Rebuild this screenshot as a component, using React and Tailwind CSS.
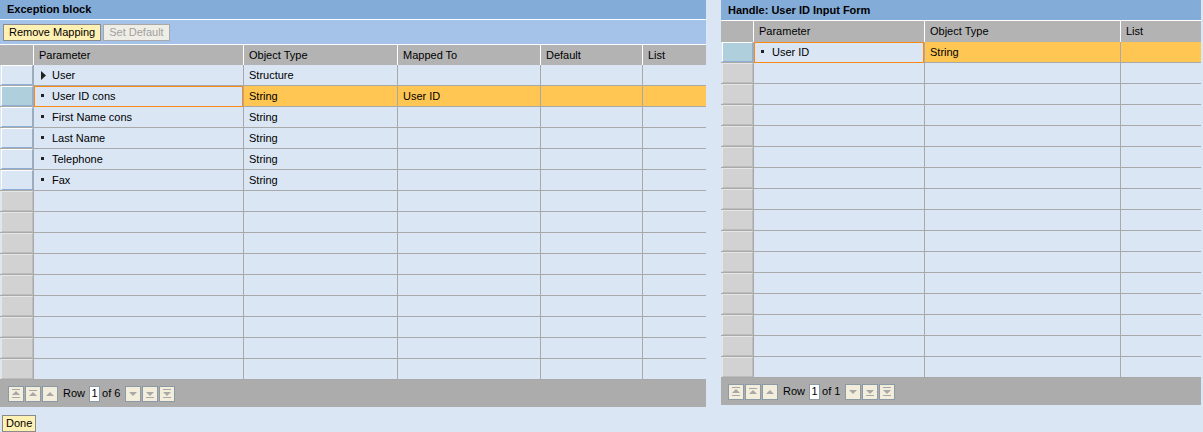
import React from "react";

const LEFT_COLS = ["w-[34px]", "w-[210px]", "w-[154px]", "w-[143px]", "w-[102px]", "flex-1"];
const RIGHT_COLS = ["w-[33px]", "w-[171px]", "w-[196px]", "flex-1"];

const leftRows = [
  { kind: "data", param: "User", expand: true, type: "Structure", mapped: "" },
  { kind: "data", param: "User ID cons", type: "String", mapped: "User ID", selected: true },
  { kind: "data", param: "First Name cons", type: "String", mapped: "" },
  { kind: "data", param: "Last Name", type: "String", mapped: "" },
  { kind: "data", param: "Telephone", type: "String", mapped: "" },
  { kind: "data", param: "Fax", type: "String", mapped: "" },
];

const rightRows = [{ kind: "data", param: "User ID", type: "String", selected: true }];

// fill a table up to a fixed number of lines
const pad = (rows, n) => [...rows, ...Array(n - rows.length).fill({ kind: "empty" })];

const Selector = ({ kind, selected }) => {
  if (kind === "empty")
    return (
      <div className="h-full w-full border border-t-[#e6e6e6] border-l-[#e6e6e6] border-r-[#bdbdbd] border-b-[#bdbdbd] bg-[#d2d2d2]" />
    );
  return (
    <div
      className={
        "h-full w-full border border-t-white border-l-white border-r-[#8eaed6] border-b-[#8eaed6] " +
        (selected ? "bg-[#aecfdb]" : "bg-[#dae6f4]")
      }
    />
  );
};

const Bullet = () => <span className="inline-block w-[3px] h-[3px] bg-[#222] mr-[7px] mb-[2px]" />;

const Expand = () => (
  <svg width="5" height="9" viewBox="0 0 5 9" className="mr-[5px]">
    <polygon points="0,0 5,4.5 0,9" fill="#222" />
  </svg>
);

const ParamCell = ({ row, width }) => (
  <div className={`${width} relative flex items-center pl-[7px] border-r border-[#a9a9a9] bg-[#dae6f4]`}>
    {row.expand ? <Expand /> : <Bullet />}
    <span className="ml-px">{row.param}</span>
    {row.selected && <div className="absolute top-0 left-0 right-0 -bottom-px border border-[#fb8a14]" />}
  </div>
);

const Cell = ({ width, selected, children }) => (
  <div
    className={`${width} flex items-center pl-[5px] border-r border-[#a9a9a9] ${selected ? "bg-[#ffc653]" : ""}`}
  >
    {children}
  </div>
);

const Header = ({ cols, labels, height }) => (
  <div className={`flex ${height} bg-[#b3b3b3]`}>
    {cols.map((w, i) => (
      <div key={i} className={`${w} flex items-center pl-[5px] ${i < cols.length - 1 ? "border-r border-white" : ""}`}>
        {labels[i]}
      </div>
    ))}
  </div>
);

const icons = {
  first: (
    <>
      <rect x="1" y="0" width="8" height="1" />
      <polygon points="1,6 5,2 9,6" />
      <rect x="1" y="8" width="8" height="1" />
    </>
  ),
  pageUp: (
    <>
      <rect x="1" y="1" width="8" height="1" />
      <polygon points="1,7 5,3 9,7" />
    </>
  ),
  up: <polygon points="1,7 5,3 9,7" />,
  down: <polygon points="1,3 5,7 9,3" />,
  pageDown: (
    <>
      <polygon points="1,3 5,7 9,3" />
      <rect x="1" y="8" width="8" height="1" />
    </>
  ),
  last: (
    <>
      <rect x="1" y="0" width="8" height="1" />
      <polygon points="1,3 5,7 9,3" />
      <rect x="1" y="8" width="8" height="1" />
    </>
  ),
};

const PagerBtn = ({ icon }) => (
  <div className="w-[16px] h-[16px] flex items-center justify-center bg-[#f3eedb] border border-[#8b9aa5]">
    <svg width="10" height="10" viewBox="0 0 10 10" fill="#a8a8a8">
      {icons[icon]}
    </svg>
  </div>
);

const Pager = ({ total, padLeft }) => (
  <div className={`flex items-center h-[27px] bg-[#acacac] text-[11px] ${padLeft}`}>
    <div className="flex gap-px">
      <PagerBtn icon="first" />
      <PagerBtn icon="pageUp" />
      <PagerBtn icon="up" />
    </div>
    <span className="ml-[5px]">Row</span>
    <div className="ml-[4px] w-[11px] h-[16px] bg-white border border-[#8b9aa5] flex items-center justify-center">
      1
    </div>
    <span className="ml-[2px]">of {total}</span>
    <div className="ml-[5px] flex gap-px">
      <PagerBtn icon="down" />
      <PagerBtn icon="pageDown" />
      <PagerBtn icon="last" />
    </div>
  </div>
);

const TitleBar = ({ children, height }) => (
  <div className={`${height} bg-[#84acd9] border-b border-white flex items-center pl-[7px] font-bold`}>
    {children}
  </div>
);

const App = () => {
  return (
    <div className="w-[1203px] h-[432px] bg-[#dae6f4] text-[11px] text-black font-['Liberation_Sans',Arial,sans-serif] overflow-hidden">
      <div className="flex">
        {/* Exception block */}
        <div className="w-[706px] flex flex-col">
          <TitleBar height="h-[20px]">Exception block</TitleBar>
          <div className="h-[25px] bg-[#a5c3e8] border-b border-white flex items-center pl-[3px] gap-[2px]">
            <button className="h-[17px] px-[5px] bg-[#fff0b3] border border-[#8a8a8a] text-[11px] leading-none">
              Remove Mapping
            </button>
            <button className="h-[17px] px-[5px] bg-[#efeee6] border border-[#a8a8a8] text-[11px] text-[#a0a0a0] leading-none">
              Set Default
            </button>
          </div>
          <Header
            cols={LEFT_COLS}
            height="h-[20px]"
            labels={["", "Parameter", "Object Type", "Mapped To", "Default", "List"]}
          />
          {pad(leftRows, 15).map((row, i) => (
            <div key={i} className="flex h-[21px] border-b border-[#a9a9a9] bg-[#dae6f4]">
              <div className={`${LEFT_COLS[0]} pl-[1px] border-r border-[#a9a9a9]`}>
                <Selector kind={row.kind} selected={row.selected} />
              </div>
              {row.kind === "data" ? (
                <ParamCell row={row} width={LEFT_COLS[1]} />
              ) : (
                <Cell width={LEFT_COLS[1]} />
              )}
              <Cell width={LEFT_COLS[2]} selected={row.selected}>{row.type}</Cell>
              <Cell width={LEFT_COLS[3]} selected={row.selected}>{row.mapped}</Cell>
              <Cell width={LEFT_COLS[4]} selected={row.selected} />
              <div className={`flex-1 ${row.selected ? "bg-[#ffc653]" : ""}`} />
            </div>
          ))}
          <Pager total={6} padLeft="pl-[8px]" />
        </div>

        {/* Handle */}
        <div className="ml-[15px] w-[480px] flex flex-col">
          <TitleBar height="h-[21px]">Handle: User ID Input Form</TitleBar>
          <Header cols={RIGHT_COLS} height="h-[21px]" labels={["", "Parameter", "Object Type", "List"]} />
          {pad(rightRows, 16).map((row, i) => (
            <div key={i} className="flex h-[21px] border-b border-[#a9a9a9] bg-[#dae6f4]">
              <div className={`${RIGHT_COLS[0]} pl-[1px] border-r border-[#a9a9a9]`}>
                <Selector kind={row.kind} selected={row.selected} />
              </div>
              {row.kind === "data" ? (
                <ParamCell row={row} width={RIGHT_COLS[1]} />
              ) : (
                <Cell width={RIGHT_COLS[1]} />
              )}
              <Cell width={RIGHT_COLS[2]} selected={row.selected}>{row.type}</Cell>
              <div className={`flex-1 ${row.selected ? "bg-[#ffc653]" : ""}`} />
            </div>
          ))}
          <Pager total={1} padLeft="pl-[7px]" />
        </div>
      </div>

      <button className="mt-[8px] ml-[2px] h-[17px] px-[3px] bg-[#fff0b3] border border-[#8a8a8a] text-[11px] leading-none">
        Done
      </button>
    </div>
  );
};

export default App;
